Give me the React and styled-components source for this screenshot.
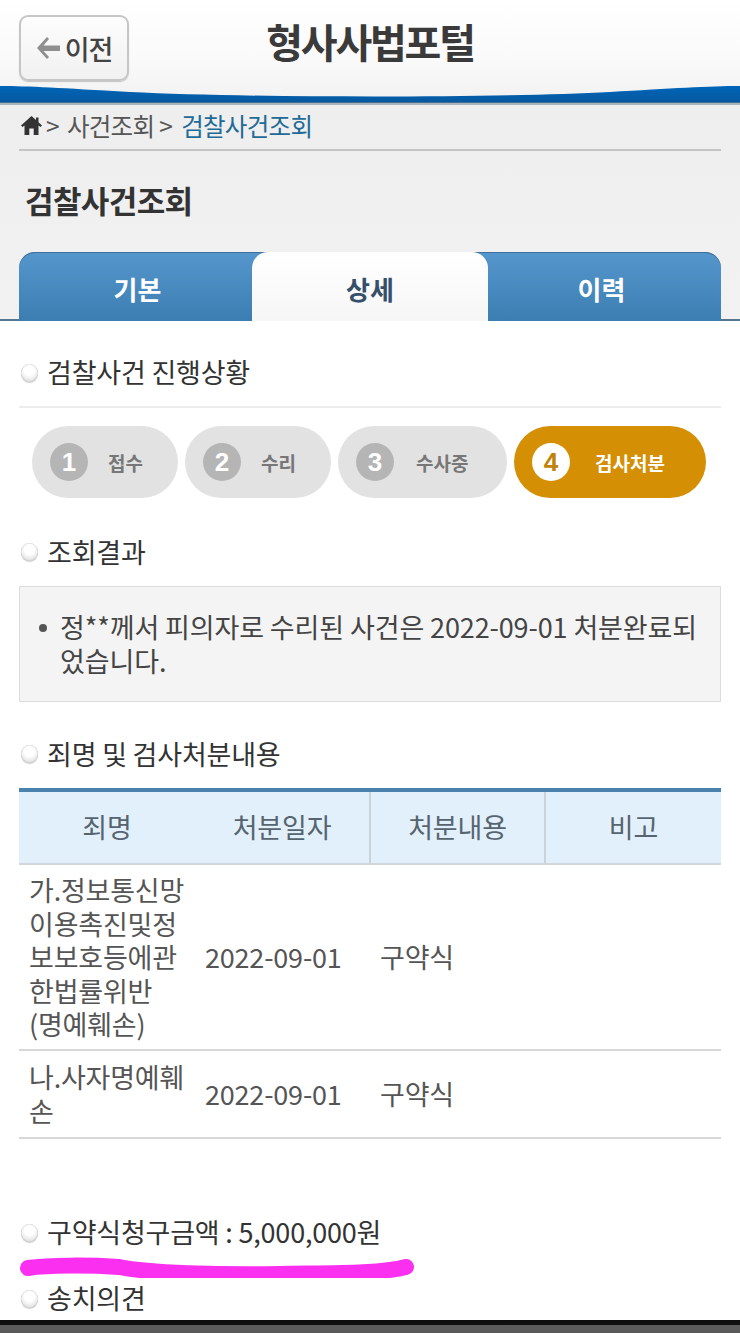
import React from "react";
import styled, { createGlobalStyle } from "styled-components";

const KR = `"Noto Sans CJK KR", "Noto Sans", sans-serif`;

const GlobalStyle = createGlobalStyle`
  html, body {
    margin: 0;
    padding: 0;
    background: #fff;
    font-family: ${KR};
  }
`;

const Page = styled.div`
  width: 740px;
  height: 1333px;
  overflow: hidden;
  display: flex;
  flex-direction: column;
  background: #fff;
`;

const Header = styled.header`
  position: relative;
  height: 105px;
  flex: none;
  background: linear-gradient(180deg, #ffffff 0%, #fafafa 55%, #f1f1f1 100%);
`;

const HeaderCurve = styled.svg`
  position: absolute;
  left: 0;
  bottom: 0;
  display: block;
`;

const HeaderInner = styled.div`
  position: relative;
  height: 88px;
  padding: 15px 0 0 19px;
  box-sizing: border-box;
`;

const BackButton = styled.button`
  width: 110px;
  height: 66px;
  box-sizing: border-box;
  display: flex;
  align-items: center;
  justify-content: center;
  gap: 5px;
  padding: 0;
  border: 2px solid #c6c6c6;
  border-radius: 9px;
  background: linear-gradient(180deg, #fdfdfd, #f1f1f1);
  box-shadow: 0 1px 1px rgba(0, 0, 0, 0.2);
  font-family: ${KR};
  font-size: 27px;
  font-weight: 500;
  letter-spacing: -1px;
  color: #444;
`;

const PortalTitle = styled.h1`
  position: absolute;
  left: 0;
  right: 0;
  top: 9px;
  margin: 0;
  text-align: center;
  font-size: 40px;
  line-height: 64px;
  font-weight: 700;
  letter-spacing: -2.2px;
  color: #3a3a3a;
`;

const TopArea = styled.div`
  flex: none;
  height: 216px;
  box-sizing: border-box;
  padding: 0 19px;
  display: flex;
  flex-direction: column;
  background: linear-gradient(180deg, #eeeeee 0%, #f2f2f2 100%);
  border-bottom: 2px solid #55768f;
`;

const Breadcrumb = styled.nav`
  height: 46px;
  flex: none;
  box-sizing: border-box;
  display: flex;
  align-items: center;
  padding: 0 0 4px 2px;
  border-bottom: 2px solid #c4c4c4;
  font-size: 24.5px;
  letter-spacing: -0.7px;
  color: #555;
`;

const Crumb = styled.span`
  margin-left: ${(p) => p.$gap}px;
  color: ${(p) => (p.$current ? "#1f6a96" : "#555")};
`;

const PageTitle = styled.h2`
  margin: 0;
  height: 101px;
  flex: none;
  box-sizing: border-box;
  padding: 0 0 5px 6px;
  display: flex;
  align-items: center;
  font-size: 31px;
  font-weight: 700;
  letter-spacing: -0.6px;
  color: #333;
`;

const Tabs = styled.div`
  flex: 1;
  display: grid;
  grid-template-columns: 233px 236px 232px;
  margin-bottom: -2px;
  border-radius: 16px 16px 0 0;
  background: linear-gradient(180deg, #5596cc 0%, #3c7db2 100%);
  box-shadow: inset 0 1px 0 #3f6f98;
`;

const Tab = styled.div`
  display: flex;
  align-items: center;
  justify-content: center;
  padding: 3px ${(p) => p.$right || 0}px 0 ${(p) => p.$left || 0}px;
  font-size: 26px;
  font-weight: 700;
  color: ${(p) => (p.$active ? "#35506a" : "#fff")};
  background: ${(p) =>
    p.$active ? "linear-gradient(180deg, #ffffff 0%, #f6f6f6 100%)" : "transparent"};
  border-radius: ${(p) => (p.$active ? "16px 16px 0 0" : "0")};
`;

const Content = styled.main`
  flex: 1;
  min-height: 0;
  padding: 0 19px;
  background: #fff;
`;

const SectionHead = styled.div`
  display: flex;
  align-items: center;
  gap: 9px;
  height: ${(p) => p.$height}px;
  margin-top: ${(p) => p.$top || 0}px;
  padding: ${(p) => p.$pad || 0}px 0 0 2px;
  box-sizing: border-box;
  font-size: 27px;
  letter-spacing: -0.2px;
  color: #333;
  border-bottom: ${(p) => (p.$rule ? "2px solid #ececec" : "none")};
`;

const Bullet = styled.span`
  width: 17px;
  height: 18px;
  flex: none;
  margin-top: 2px;
  border-radius: 50%;
  background: radial-gradient(circle at 50% 35%, #ffffff 35%, #d0d0d0 100%);
  box-shadow: inset 0 0 1px #999, 0 1px 1px #ccc;
`;

const Steps = styled.div`
  display: flex;
  gap: 7px;
  padding: 18px 0 0 13px;
`;

const Step = styled.div`
  width: ${(p) => p.$width}px;
  height: 72px;
  flex: none;
  box-sizing: border-box;
  display: flex;
  align-items: center;
  padding-left: 18px;
  border-radius: 36px;
  background: ${(p) => (p.$active ? "#d48f05" : "#e2e2e2")};
  color: ${(p) => (p.$active ? "#fff" : "#777")};
  font-size: 19px;
  font-weight: 700;
`;

const StepNumber = styled.span`
  width: 38px;
  height: 38px;
  flex: none;
  display: flex;
  align-items: center;
  justify-content: center;
  border-radius: 50%;
  margin-right: ${(p) => p.$gap}px;
  background: ${(p) => (p.$active ? "#fff" : "#b5b5b5")};
  color: ${(p) => (p.$active ? "#c08208" : "#fff")};
  font-family: "Liberation Sans", sans-serif;
  font-size: 26px;
  font-weight: 700;
`;

const ResultBox = styled.div`
  box-sizing: border-box;
  height: 116px;
  margin-top: 13px;
  padding: 23px 20px 0 40px;
  position: relative;
  border: 1px solid #dcdcdc;
  background: #f4f4f4;
  font-size: 27px;
  line-height: 34px;
  letter-spacing: -0.12px;
  color: #444;
  &::before {
    content: "";
    position: absolute;
    left: 19px;
    top: 37px;
    width: 8px;
    height: 8px;
    border-radius: 50%;
    background: #555;
  }
`;

const DataTable = styled.table`
  width: 702px;
  margin-top: 13px;
  border-collapse: collapse;
  table-layout: fixed;
  border-top: 4px solid #4a82ad;
  font-size: 27px;
  letter-spacing: -0.2px;
  color: #555;
`;

const HeadCell = styled.th`
  height: 69px;
  padding: 0 0 2px;
  background: #e2f0fb;
  font-weight: 400;
  color: #56646f;
  border-bottom: 2px solid #cfd6dc;
  border-right: ${(p) => (p.$divider ? "2px solid #c8d3dc" : "none")};
`;

const BodyRow = styled.tr`
  border-bottom: 2px solid #d8d8d8;
`;

const BodyCell = styled.td`
  padding: ${(p) => p.$pad}px 8px ${(p) => p.$pad}px 10px;
  line-height: 33.5px;
  vertical-align: middle;
  word-break: break-all;
`;

const Highlight = styled.svg`
  display: block;
`;

const BottomBar = styled.div`
  flex: none;
  height: 13px;
  background: linear-gradient(180deg, #0c0c0c 0%, #111 35%, #5c5c5c 42%, #585858 100%);
`;

const steps = [
  { n: 1, label: "접수", width: 146, gap: 20 },
  { n: 2, label: "수리", width: 146, gap: 20 },
  { n: 3, label: "수사중", width: 169, gap: 22 },
  { n: 4, label: "검사처분", width: 192, gap: 25, active: true },
];

function BackArrow() {
  return (
    <svg width="24" height="24" viewBox="0 0 24 24">
      <path d="M11 1 L1 12 L11 23 L13 21 L7.5 15 L24 15 L24 9.5 L7.5 9.5 L13 3 Z" fill="#8f8f8f" />
    </svg>
  );
}

function HomeIcon() {
  return (
    <svg width="21" height="19" viewBox="0 0 21 19">
      <path d="M10.5 0 L0 9.5 L1.5 11 L3.5 9.4 V19 H8.3 V12.5 H12.7 V19 H17.5 V9.4 L19.5 11 L21 9.5 L17.5 6.3 V1.5 H15 V4 Z" fill="#333" />
    </svg>
  );
}

export default function App() {
  return (
    <Page>
      <GlobalStyle />
      <Header>
        <HeaderCurve width="740" height="20" viewBox="0 0 740 20">
          <defs>
            <linearGradient id="band" x1="0" y1="0" x2="0" y2="1">
              <stop offset="0" stopColor="#0065b8" />
              <stop offset="1" stopColor="#07589e" />
            </linearGradient>
          </defs>
          <path d="M0 1 C 30 1, 60 3, 130 7 C 250 13, 500 13, 610 7 C 670 3.5, 710 1, 740 1 V18 H0 Z" fill="url(#band)" />
          <rect y="17" width="740" height="3" fill="#6f7f8c" opacity="0.55" />
        </HeaderCurve>
        <HeaderInner>
          <BackButton>
            <BackArrow />
            이전
          </BackButton>
          <PortalTitle>형사사법포털</PortalTitle>
        </HeaderInner>
      </Header>

      <TopArea>
        <Breadcrumb>
          <HomeIcon />
          <Crumb $gap={4}>&gt;</Crumb>
          <Crumb $gap={8}>사건조회</Crumb>
          <Crumb $gap={5}>&gt;</Crumb>
          <Crumb $gap={9} $current>검찰사건조회</Crumb>
        </Breadcrumb>
        <PageTitle>검찰사건조회</PageTitle>
        <Tabs>
          <Tab $left={4}>기본</Tab>
          <Tab $active>상세</Tab>
          <Tab $right={5}>이력</Tab>
        </Tabs>
      </TopArea>

      <Content>
        <SectionHead $height={87} $pad={16} $rule>
          <Bullet />
          검찰사건 진행상황
        </SectionHead>
        <Steps>
          {steps.map((s) => (
            <Step key={s.n} $width={s.width} $active={s.active}>
              <StepNumber $gap={s.gap} $active={s.active}>{s.n}</StepNumber>
              {s.label}
            </Step>
          ))}
        </Steps>
        <SectionHead $height={44} $top={31}>
          <Bullet />
          조회결과
        </SectionHead>
        <ResultBox>정**께서 피의자로 수리된 사건은 2022-09-01 처분완료되었습니다.</ResultBox>
        <SectionHead $height={44} $top={29}>
          <Bullet />
          죄명 및 검사처분내용
        </SectionHead>
        <DataTable>
          <colgroup>
            <col width="176" />
            <col width="175" />
            <col width="175" />
            <col width="176" />
          </colgroup>
          <thead>
            <tr>
              <HeadCell>죄명</HeadCell>
              <HeadCell $divider>처분일자</HeadCell>
              <HeadCell $divider>처분내용</HeadCell>
              <HeadCell>비고</HeadCell>
            </tr>
          </thead>
          <tbody>
            <BodyRow>
              <BodyCell $pad={8}>{"가.정보통신망이용촉진및정보보호등에관한법률위반(\u2060명\u2060예\u2060훼\u2060손\u2060)"}</BodyCell>
              <BodyCell $pad={8}>2022-09-01</BodyCell>
              <BodyCell $pad={8}>구약식</BodyCell>
              <BodyCell $pad={8} />
            </BodyRow>
            <BodyRow>
              <BodyCell $pad={9.5}>나.사자명예훼손</BodyCell>
              <BodyCell $pad={9.5}>2022-09-01</BodyCell>
              <BodyCell $pad={9.5}>구약식</BodyCell>
              <BodyCell $pad={9.5} />
            </BodyRow>
          </tbody>
        </DataTable>
        <SectionHead $height={40} $top={73}>
          <Bullet />
          구약식청구금액 : 5,000,000원
        </SectionHead>
        <Highlight width="400" height="26" viewBox="0 0 400 26">
          <path
            d="M9 16 C 30 13, 70 13, 100 15 C 130 21, 200 23, 260 22 C 310 21, 360 22, 387 15"
            fill="none"
            stroke="#fb2ff0"
            strokeWidth="16"
            strokeLinecap="round"
          />
        </Highlight>
        <SectionHead $height={40}>
          <Bullet />
          송치의견
        </SectionHead>
      </Content>
      <BottomBar />
    </Page>
  );
}
